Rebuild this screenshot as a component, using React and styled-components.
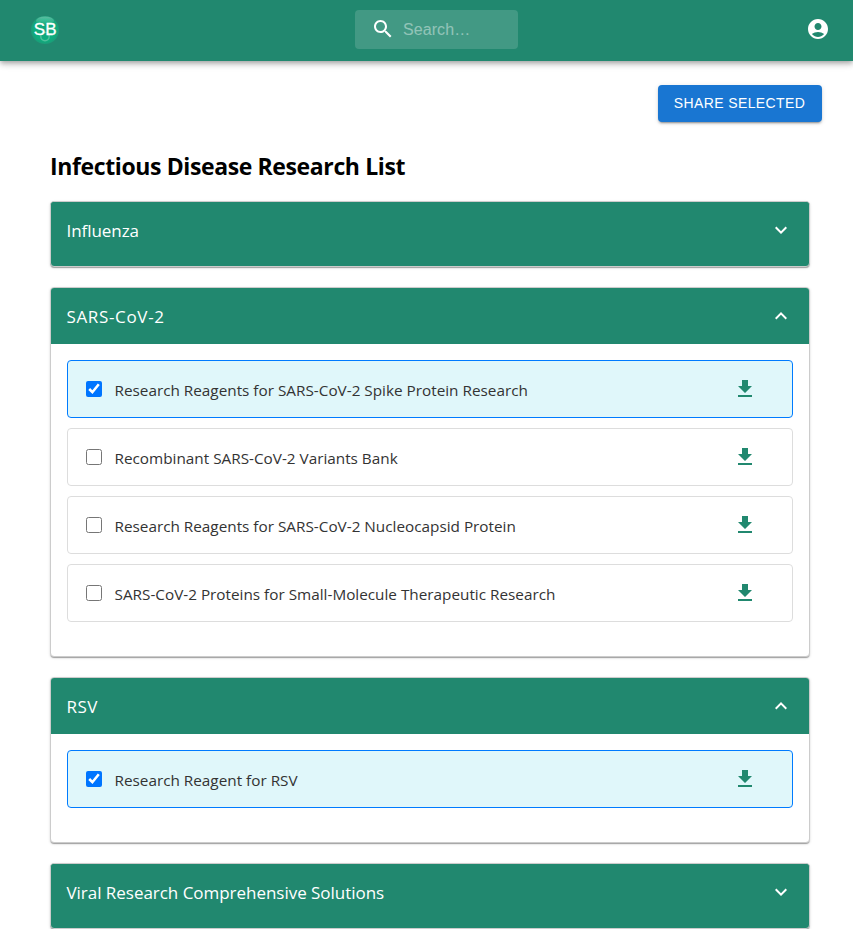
import React, { useState } from 'react';
import styled, { createGlobalStyle } from 'styled-components';

const GREEN = '#21886f';

const GlobalStyle = createGlobalStyle`
  *, *::before, *::after { box-sizing: border-box; }
  body {
    margin: 0;
    background: #fff;
    color: #000;
    font-family: 'Open Sans', 'Noto Sans', sans-serif;
  }
`;

const TopBar = styled.header`
  display: grid;
  grid-template-columns: 324px 163px 1fr;
  align-items: center;
  height: 61px;
  padding: 0 23px 2px 31px;
  background: ${GREEN};
  box-shadow: 0 2px 4px -1px rgba(0, 0, 0, 0.2), 0 4px 5px 0 rgba(0, 0, 0, 0.14),
    0 1px 10px 0 rgba(0, 0, 0, 0.12);
`;

const Logo = styled.svg`
  display: block;
  width: 28px;
  height: 28px;
  overflow: visible;
`;

const LogoText = styled.text`
  font: 17px 'Liberation Sans', Arial, sans-serif;
  fill: #fff;
  stroke: #fff;
  stroke-width: 0.3px;
`;

const SearchBox = styled.label`
  display: flex;
  align-items: center;
  gap: 8px;
  height: 39px;
  padding: 0 0 2px 16px;
  border-radius: 4px;
  background: rgba(255, 255, 255, 0.15);
`;

const SearchInput = styled.input`
  flex: 1;
  min-width: 0;
  padding: 2px 0 0;
  border: 0;
  outline: 0;
  background: transparent;
  color: #fff;
  font: 16px 'Liberation Sans', Arial, sans-serif;
  letter-spacing: 0.08px;
  &::placeholder { color: #fff; opacity: 0.42; }
`;

const IconButton = styled.button`
  display: flex;
  padding: 0;
  border: 0;
  background: none;
  color: ${(p) => p.$color || '#fff'};
  justify-self: end;
  cursor: pointer;
`;

const AccountButton = styled(IconButton)`
  padding-bottom: 2px;
`;

const Svg = styled.svg`
  display: block;
  flex: none;
  width: 24px;
  height: 24px;
  fill: ${(p) => p.$fill || 'currentColor'};
`;

const Icon = ({ d, fill }) => (
  <Svg viewBox="0 0 24 24" $fill={fill} aria-hidden="true">
    <path d={d} />
  </Svg>
);

const icons = {
  search:
    'M15.5 14h-.79l-.28-.27C15.41 12.59 16 11.11 16 9.5 16 5.91 13.09 3 9.5 3S3 5.91 3 9.5 5.91 16 9.5 16c1.61 0 3.09-.59 4.23-1.57l.27.28v.79l5 4.99L20.49 19zm-6 0C7.01 14 5 11.99 5 9.5S7.01 5 9.5 5 14 7.01 14 9.5 11.99 14 9.5 14',
  account:
    'M12 2C6.48 2 2 6.48 2 12s4.48 10 10 10 10-4.48 10-10S17.52 2 12 2m0 4c1.93 0 3.5 1.57 3.5 3.5S13.93 13 12 13s-3.5-1.57-3.5-3.5S10.07 6 12 6m0 14c-2.03 0-4.43-.82-6.14-2.88C7.55 15.8 9.68 15 12 15s4.45.8 6.14 2.12C16.43 19.18 14.03 20 12 20',
  download: 'M5 20h14v-2H5zM19 9h-4V3H9v6H5l7 7z',
  expand: 'M16.59 8.59 12 13.17 7.41 8.59 6 10l6 6 6-6z',
  collapse: 'm12 8-6 6 1.41 1.41L12 10.83l4.59 4.58L18 14z',
};

const Actions = styled.div`
  display: flex;
  justify-content: flex-end;
  padding: 24px 31px 0 0;
`;

const ShareButton = styled.button`
  height: 37px;
  width: 164px;
  padding: 0 1px 1px 0;
  border: 0;
  border-radius: 4px;
  background: #1976d2;
  color: #fff;
  font: 14px 'Liberation Sans', Arial, sans-serif;
  letter-spacing: 0.4px;
  white-space: nowrap;
  box-shadow: 0 3px 1px -2px rgba(0, 0, 0, 0.2), 0 2px 2px 0 rgba(0, 0, 0, 0.14),
    0 1px 5px 0 rgba(0, 0, 0, 0.12);
  cursor: pointer;
`;

const Content = styled.main`
  width: 760px;
  margin: 28px 0 0 50px;
`;

const Title = styled.h1`
  margin: 0 0 18px;
  font-size: 23px;
  line-height: 33px;
  font-weight: 700;
  letter-spacing: -0.38px;
  white-space: nowrap;
`;

const Sections = styled.div`
  display: flex;
  flex-direction: column;
  gap: 20px;
`;

const Card = styled.section`
  border: 1px solid #ccc;
  border-radius: 4px;
  overflow: hidden;
  padding-bottom: ${(p) => (p.$open ? '0' : '8px')};
  background: ${(p) => (p.$open ? '#fff' : GREEN)};
  box-shadow: 0 2px 1px -1px rgba(0, 0, 0, 0.2), 0 1px 1px 0 rgba(0, 0, 0, 0.14),
    0 1px 3px 0 rgba(0, 0, 0, 0.12);
`;

const CardHeader = styled.div`
  display: flex;
  align-items: center;
  justify-content: space-between;
  height: 56px;
  padding: 0 16px 0 15.5px;
  background: ${GREEN};
  color: #fff;
`;

const CardTitle = styled.h2`
  margin: 0;
  padding-top: 2px;
  font-size: 17px;
  font-weight: 400;
  line-height: 24px;
  letter-spacing: ${(p) => p.$spacing};
  white-space: nowrap;
`;

const ItemList = styled.div`
  display: flex;
  flex-direction: column;
  gap: 10px;
  padding: 16px 16px 34px;
`;

const Item = styled.div`
  display: flex;
  align-items: center;
  height: 58px;
  padding: 0 35px 0 18px;
  border: 1px solid ${(p) => (p.$selected ? '#007bff' : '#ddd')};
  border-radius: 4px;
  background: ${(p) => (p.$selected ? '#e0f7fa' : '#fff')};
`;

const Check = styled.input`
  width: 16px;
  height: 16px;
  margin: 0 12.5px 0 0;
`;

const ItemLabel = styled.span`
  flex: 1;
  padding-top: 1px;
  color: #333;
  font-size: 15.3px;
  line-height: 24px;
  letter-spacing: 0;
  white-space: nowrap;
`;

const initialSections = [
  { title: 'Influenza', spacing: '-0.06px', open: false, items: [] },
  {
    title: 'SARS-CoV-2',
    spacing: '0.65px',
    open: true,
    items: [
      { name: 'Research Reagents for SARS-CoV-2 Spike Protein Research', selected: true },
      { name: 'Recombinant SARS-CoV-2 Variants Bank', selected: false },
      { name: 'Research Reagents for SARS-CoV-2 Nucleocapsid Protein', selected: false },
      { name: 'SARS-CoV-2 Proteins for Small-Molecule Therapeutic Research', selected: false },
    ],
  },
  {
    title: 'RSV',
    spacing: '0.5px',
    open: true,
    items: [{ name: 'Research Reagent for RSV', selected: true }],
  },
  { title: 'Viral Research Comprehensive Solutions', spacing: '-0.03px', open: false, items: [] },
];

function BrandLogo() {
  return (
    <Logo viewBox="0 0 28 28" role="img" aria-label="SB">
      <defs>
        <radialGradient id="brand" cx="50%" cy="50%" r="50%">
          <stop offset="0" stopColor="#16a37d" />
          <stop offset="0.75" stopColor="#0dae7e" />
          <stop offset="1" stopColor="#1b9c78" />
        </radialGradient>
        <linearGradient id="shine" x1="0" y1="0" x2="0" y2="1">
          <stop offset="0" stopColor="#fff" stopOpacity="0.3" />
          <stop offset="1" stopColor="#fff" stopOpacity="0" />
        </linearGradient>
      </defs>
      <circle cx="14" cy="14" r="14" fill="url(#brand)" />
      <ellipse cx="14" cy="5" rx="9" ry="4.5" fill="url(#shine)" />
      <circle cx="14" cy="20.5" r="4.2" fill="none" stroke="#4fc09c" strokeWidth="1.5" />
      <LogoText x="2.8" y="18.5" textLength="22.7">SB</LogoText>
    </Logo>
  );
}

export default function App() {
  const [sections, setSections] = useState(initialSections);

  const toggleSection = (index) =>
    setSections((all) => all.map((s, i) => (i === index ? { ...s, open: !s.open } : s)));

  const toggleItem = (index, name) =>
    setSections((all) =>
      all.map((s, i) =>
        i !== index
          ? s
          : {
              ...s,
              items: s.items.map((it) => (it.name === name ? { ...it, selected: !it.selected } : it)),
            }
      )
    );

  return (
    <>
      <GlobalStyle />
      <TopBar>
        <BrandLogo />
        <SearchBox>
          <Icon d={icons.search} fill="#fff" />
          <SearchInput placeholder="Search…" />
        </SearchBox>
        <AccountButton aria-label="Account">
          <Icon d={icons.account} />
        </AccountButton>
      </TopBar>
      <Actions>
        <ShareButton>SHARE SELECTED</ShareButton>
      </Actions>
      <Content>
        <Title>Infectious Disease Research List</Title>
        <Sections>
          {sections.map((section, index) => (
            <Card key={section.title} $open={section.open}>
              <CardHeader>
                <CardTitle $spacing={section.spacing}>{section.title}</CardTitle>
                <IconButton aria-label="Toggle section" onClick={() => toggleSection(index)}>
                  <Icon d={section.open ? icons.collapse : icons.expand} />
                </IconButton>
              </CardHeader>
              {section.open && (
                <ItemList>
                  {section.items.map((item) => (
                    <Item key={item.name} $selected={item.selected}>
                      <Check
                        type="checkbox"
                        checked={item.selected}
                        onChange={() => toggleItem(index, item.name)}
                      />
                      <ItemLabel>{item.name}</ItemLabel>
                      <IconButton $color={GREEN} aria-label="Download">
                        <Icon d={icons.download} />
                      </IconButton>
                    </Item>
                  ))}
                </ItemList>
              )}
            </Card>
          ))}
        </Sections>
      </Content>
    </>
  );
}
